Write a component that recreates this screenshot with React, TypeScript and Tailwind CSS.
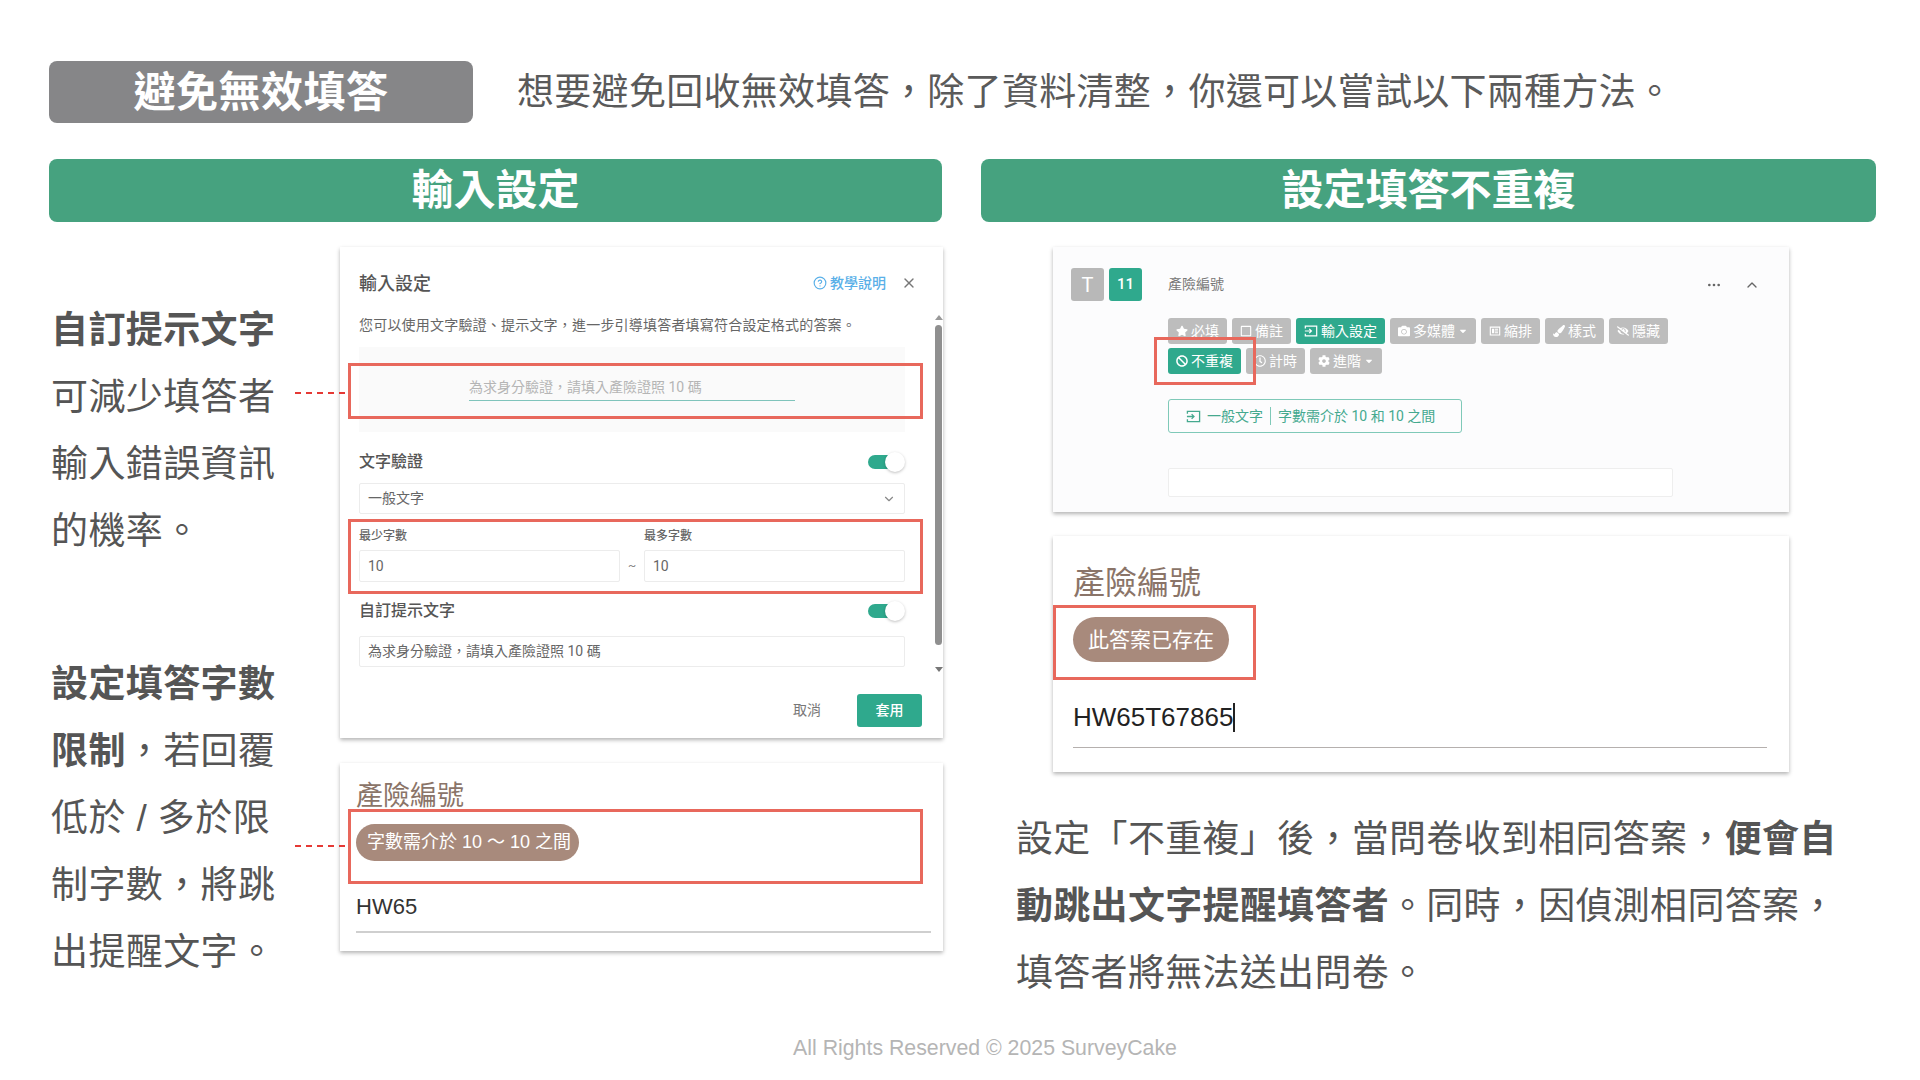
import React from "react";
import { ChevronDown, ChevronUp, CircleHelp, Ellipsis, X } from "lucide-react";
import { FaBan, FaCamera, FaCaretDown, FaCog, FaEyeSlash, FaPaintBrush, FaRegClock, FaRegSquare, FaStar } from "react-icons/fa";

function InputIcon({ className }: { className?: string }) {
  return (
    <svg viewBox="0 0 16 16" fill="none" stroke="currentColor" strokeWidth="1.4" className={className}>
      <path d="M1.5 5V2.5h13v11h-13V11" />
      <path d="M1 8h7.5M6 5.5 8.5 8 6 10.5" />
    </svg>
  );
}

function IndentIcon({ className }: { className?: string }) {
  return (
    <svg viewBox="0 0 16 16" fill="currentColor" className={className}>
      <path fillRule="evenodd" d="M1 2h14v12H1zM2.5 3.5v9h11v-9zM4 5h3v6H4zM8 5h4v1.2H8zM8 7.4h4v1.2H8zM8 9.8h4V11H8z" />
    </svg>
  );
}

function Toggle() {
  return (
    <div className="relative w-[37px] h-[20px] flex items-center">
      <div className="w-[28px] h-[14px] rounded-full bg-[#2fa98d]" />
      <div className="absolute right-0 top-0 w-[20px] h-[20px] rounded-full bg-white shadow-[0_1px_3px_rgba(0,0,0,0.25)]" />
    </div>
  );
}

function Tag({ icon, label, active, caret }: { icon: React.ReactNode; label: string; active?: boolean; caret?: boolean }) {
  return (
    <div className={"h-[26px] px-2 flex items-center gap-[3px] rounded-[3px] text-[14px] text-white " + (active ? "bg-[#2fa98d]" : "bg-[#bdbdbd]")}>
      {icon}
      <span>{label}</span>
      {caret && <FaCaretDown className="w-[10px] h-[10px]" />}
    </div>
  );
}

function ModalCard() {
  return (
    <div className="relative w-[603px] h-[491px] bg-white pt-[24px] pl-[19px] shadow-[0_2px_4px_rgba(0,0,0,0.3)] font-['Roboto','Noto_Sans_CJK_TC',sans-serif]">
      <div className="flex items-center h-[24px] w-[558px]">
        <span className="text-[18px] font-medium text-[#555]">輸入設定</span>
        <div className="ml-auto flex items-center gap-[3px] text-[14px] font-medium text-[#5ab0e8]">
          <CircleHelp className="w-[14px] h-[14px]" />
          <span>教學說明</span>
        </div>
        <X className="ml-[15px] w-[16px] h-[16px] text-[#777]" />
      </div>
      <p className="mt-[20px] h-[20px] text-[14px] leading-[20px] tracking-[0.2px] text-[#666] whitespace-nowrap">您可以使用文字驗證、提示文字&#xFF0C;進一步引導填答者填寫符合設定格式的答案。</p>
      <div className="mt-[12px] w-[546px] h-[85px] bg-[#fafafa] pt-[30px] pl-[110px]">
        <div className="w-[326px] h-[24px] border-b border-[#7fc4bb] text-[14px] leading-[20px] text-[#b5b5b5]">為求身分驗證&#xFF0C;請填入產險證照 10 碼</div>
      </div>

      <div className="mt-[18px] w-[546px] h-[24px] flex items-center justify-between">
        <span className="text-[16px] font-medium text-[#555]">文字驗證</span>
        <Toggle />
      </div>
      <div className="mt-[9px] w-[546px] h-[31px] px-2 flex items-center justify-between border border-[#ececec] rounded-[2px] text-[14px] text-[#666]">
        <span>一般文字</span>
        <ChevronDown className="w-[14px] h-[14px] text-[#888]" />
      </div>

      <div className="mt-[14px] w-[546px] flex">
        <div className="w-[261px]">
          <div className="h-[16px] text-[12px] leading-[16px] font-medium text-[#666]">最少字數</div>
          <div className="mt-[6px] h-[32px] px-2 flex items-center border border-[#ececec] rounded-[2px] text-[14px] text-[#666]">10</div>
        </div>
        <div className="w-[24px] mt-[22px] h-[32px] flex items-center justify-center text-[12px] text-[#888]">~</div>
        <div className="w-[261px]">
          <div className="h-[16px] text-[12px] leading-[16px] font-medium text-[#666]">最多字數</div>
          <div className="mt-[6px] h-[32px] px-2 flex items-center border border-[#ececec] rounded-[2px] text-[14px] text-[#666]">10</div>
        </div>
      </div>

      <div className="mt-[17px] w-[546px] h-[24px] flex items-center justify-between">
        <span className="text-[16px] font-medium text-[#555]">自訂提示文字</span>
        <Toggle />
      </div>
      <div className="mt-[13px] w-[546px] h-[31px] px-2 flex items-center border border-[#ececec] rounded-[2px] text-[14px] text-[#666]">為求身分驗證&#xFF0C;請填入產險證照 10 碼</div>

      <div className="mt-[27px] w-[563px] flex items-center justify-end">
        <span className="text-[14px] text-[#777]">取消</span>
        <div className="ml-[36px] w-[65px] h-[33px] rounded-[3px] bg-[#2fa98d] flex items-center justify-center text-[14px] font-medium text-white">套用</div>
      </div>

      {/* scrollbar */}
      <div className="absolute left-[595px] top-[68px] w-[7px] h-[357px] flex flex-col items-center">
        <div className="w-0 h-0 border-x-[4px] border-x-transparent border-b-[5px] border-b-[#999]" />
        <div className="mt-[5px] w-[7px] h-[320px] rounded-full bg-[#8f8f8f]" />
        <div className="mt-[22px] w-0 h-0 border-x-[4px] border-x-transparent border-t-[5px] border-t-[#777]" />
      </div>

      {/* red highlights */}
      <div className="absolute left-[8px] top-[116px] w-[575px] h-[56px] border-[3px] border-[#e8685c]" />
      <div className="absolute left-[8px] top-[272px] w-[575px] h-[75px] border-[3px] border-[#e8685c]" />
    </div>
  );
}

function ErrorCard() {
  return (
    <div className="relative mt-[25px] w-[603px] h-[188px] bg-white pt-[16px] pl-[16px] shadow-[0_2px_4px_rgba(0,0,0,0.3)]">
      <div className="text-[27px] leading-[34px] text-[#8a7468]">產險編號</div>
      <div className="mt-[11px] w-[223px] h-[37px] pl-[11px] flex items-center rounded-full bg-[#a88a7c] text-[18px] text-white whitespace-nowrap">字數需介於 10 &#xFF5E; 10 之間</div>
      <div className="mt-[32px] h-[28px] text-[22px] leading-[28px] text-[#333]">HW65</div>
      <div className="mt-[10px] w-[575px] h-[2px] bg-[#cfcfcf]" />
      <div className="absolute left-[8px] top-[46px] w-[575px] h-[75px] border-[3px] border-[#e8685c]" />
    </div>
  );
}

function QuestionCard() {
  return (
    <div className="relative w-[736px] h-[265px] bg-[#fcfcfd] pt-[21px] pl-[18px] shadow-[0_2px_4px_rgba(0,0,0,0.3)] font-['Roboto','Noto_Sans_CJK_TC',sans-serif]">
      <div className="flex items-center h-[33px]">
        <div className="w-[33px] h-[33px] rounded-[3px] bg-[#b8b8b8] flex items-center justify-center text-[20px] text-white">T</div>
        <div className="ml-[5px] w-[33px] h-[33px] rounded-[3px] bg-[#2fa98d] flex items-center justify-center text-[15px] font-medium text-white">11</div>
        <span className="ml-[26px] text-[14px] text-[#777]">產險編號</span>
        <Ellipsis className="ml-auto w-[16px] h-[16px] text-[#666]" />
        <ChevronUp className="ml-[22px] mr-[29px] w-[16px] h-[16px] text-[#666]" />
      </div>
      <div className="ml-[97px] mt-[17px] w-[510px] flex flex-wrap gap-x-[5px] gap-y-[4px]">
        <Tag icon={<FaStar className="w-[12px] h-[12px]" />} label="必填" />
        <Tag icon={<FaRegSquare className="w-[12px] h-[12px]" />} label="備註" />
        <Tag active icon={<InputIcon className="w-[14px] h-[14px]" />} label="輸入設定" />
        <Tag caret icon={<FaCamera className="w-[12px] h-[12px]" />} label="多媒體" />
        <Tag icon={<IndentIcon className="w-[12px] h-[12px]" />} label="縮排" />
        <Tag icon={<FaPaintBrush className="w-[12px] h-[12px]" />} label="樣式" />
        <Tag icon={<FaEyeSlash className="w-[12px] h-[12px]" />} label="隱藏" />
        <Tag active icon={<FaBan className="w-[12px] h-[12px]" />} label="不重複" />
        <Tag icon={<FaRegClock className="w-[12px] h-[12px]" />} label="計時" />
        <Tag caret icon={<FaCog className="w-[12px] h-[12px]" />} label="進階" />
      </div>
      <div className="ml-[97px] mt-[25px] w-[294px] h-[34px] px-[17px] flex items-center gap-[4px] border border-[#7fc9b8] rounded-[3px] text-[14px] text-[#45a98f] whitespace-nowrap">
        <InputIcon className="w-[15px] h-[15px] mr-[2px]" />
        <span>一般文字</span>
        <span className="mx-[3px] w-px h-[18px] bg-[#7fc9b8]" />
        <span>字數需介於 10 和 10 之間</span>
      </div>
      <div className="ml-[97px] mt-[35px] w-[505px] h-[29px] bg-white border border-[#eeeeee] rounded-[2px]" />
      <div className="absolute left-[101px] top-[90px] w-[102px] h-[48px] border-[3px] border-[#e8685c]" />
    </div>
  );
}

function DuplicateCard() {
  return (
    <div className="relative mt-[24px] w-[736px] h-[236px] bg-white pt-[27px] pl-[20px] shadow-[0_2px_4px_rgba(0,0,0,0.3)]">
      <div className="text-[32px] leading-[40px] text-[#8a7468]">產險編號</div>
      <div className="mt-[14px] w-fit h-[45px] px-[15px] flex items-center rounded-full bg-[#a88a7c] text-[21px] text-white">此答案已存在</div>
      <div className="mt-[40px] flex items-center h-[30px]">
        <span className="text-[26px] leading-[30px] text-[#222]">HW65T67865</span>
        <span className="w-[2px] h-[29px] bg-[#222]" />
      </div>
      <div className="mt-[15px] w-[694px] h-px bg-[#b5b0ae]" />
      <div className="absolute left-0 top-[69px] w-[203px] h-[75px] border-[3px] border-[#e8685c]" />
    </div>
  );
}

export default function App() {
  return (
    <div className="w-[1920px] h-[1080px] overflow-hidden bg-white pt-[61px] pl-[49px] font-['Liberation_Sans','Noto_Sans_CJK_TC',sans-serif]">
      <div className="flex items-center h-[62px]">
        <div className="w-[424px] h-[62px] rounded-[8px] bg-[#868688] flex items-center justify-center text-[42px] font-bold tracking-[0.5px] text-white">避免無效填答</div>
        <p className="ml-[44px] pt-[2px] text-[37px] tracking-[0.3px] text-[#5a5a5a] whitespace-nowrap">想要避免回收無效填答&#xFF0C;除了資料清整&#xFF0C;你還可以嘗試以下兩種方法。</p>
      </div>

      <div className="mt-[36px] flex gap-[39px]">
        <section className="w-[893px] shrink-0">
          <div className="h-[63px] rounded-[8px] bg-[#46a27f] flex items-center justify-center text-[42px] font-bold text-white">輸入設定</div>
          <div className="mt-[25px] flex">
            <div className="w-[243px] shrink-0 pl-[2px] pt-[50px] text-[37px] leading-[67px] tracking-[0.4px] text-[#555] whitespace-nowrap">
              <p><b className="font-bold">自訂提示文字</b><br />可減少填答者<br />輸入錯誤資訊<br />的機率。</p>
              <p className="mt-[86px]"><b className="font-bold">設定填答字數<br />限制</b>&#xFF0C;若回覆<br />低於 / 多於限<br />制字數&#xFF0C;將跳<br />出提醒文字。</p>
            </div>
            <div className="relative z-10 w-[48px] shrink-0 pt-[145px]">
              <div className="ml-[3px] w-[50px] border-t-2 border-dashed border-[#e53935]" />
              <div className="ml-[3px] mt-[451px] w-[50px] border-t-2 border-dashed border-[#e53935]" />
            </div>
            <div className="shrink-0">
              <ModalCard />
              <ErrorCard />
            </div>
          </div>
        </section>

        <section className="w-[895px] shrink-0">
          <div className="h-[63px] rounded-[8px] bg-[#46a27f] flex items-center justify-center text-[42px] font-bold text-white">設定填答不重複</div>
          <div className="mt-[25px] ml-[72px]">
            <QuestionCard />
            <DuplicateCard />
          </div>
          <p className="mt-[34px] ml-[35px] text-[37px] leading-[67px] tracking-[0.3px] text-[#555] whitespace-nowrap">
            設定「不重複」後&#xFF0C;當問卷收到相同答案&#xFF0C;<b className="font-bold">便會自<br />動跳出文字提醒填答者</b>。同時&#xFF0C;因偵測相同答案&#xFF0C;<br />填答者將無法送出問卷。
          </p>
        </section>
      </div>

      <div className="mt-[26px] w-[1872px] text-center text-[21.3px] leading-[30px] text-[#b5b5b5]">All Rights Reserved © 2025 SurveyCake</div>
    </div>
  );
}
